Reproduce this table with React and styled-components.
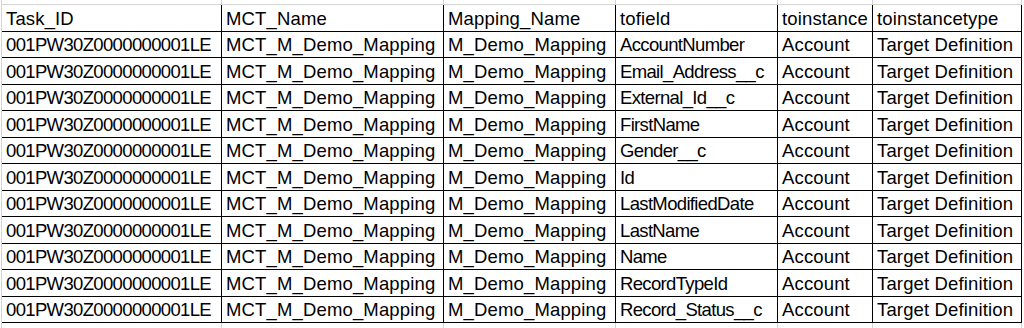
import React from "react";
import styled, { createGlobalStyle } from "styled-components";

const GlobalStyle = createGlobalStyle`
  html, body {
    margin: 0;
    padding: 0;
    background: #ffffff;
  }
  body {
    font-family: "Liberation Sans", Arial, sans-serif;
    color: #000000;
  }
`;

const cols = "220px 222px 172px 162px 95px 149px";

const Sheet = styled.div`
  width: 1024px;
  height: 328px;
  overflow: hidden;
  padding-left: 1px;
  box-sizing: border-box;
`;

const Grid = styled.div`
  display: grid;
  grid-template-columns: ${cols};
  border-left: 1px solid #d4d4d4;
  width: max-content;
`;

const GhostCell = styled.div`
  box-sizing: border-box;
  height: ${(p) => p.$h}px;
  border-right: 1px solid #d4d4d4;
  border-bottom: ${(p) => (p.$top ? "1px solid #d4d4d4" : "none")};
`;

const Cell = styled.div`
  box-sizing: border-box;
  height: 26.5px;
  display: flex;
  align-items: flex-end;
  padding: 0 0 1px 4px;
  border-right: 1px solid #000000;
  border-bottom: 1px solid #000000;
  font-size: 18.5px;
  line-height: 22px;
  letter-spacing: ${(p) => (p.$tight ? "-0.65px" : "0.15px")};
  white-space: nowrap;
  overflow: hidden;
`;

const headers = [
  "Task_ID",
  "MCT_Name",
  "Mapping_Name",
  "tofield",
  "toinstance",
  "toinstancetype",
];

const fields = [
  "AccountNumber",
  "Email_Address__c",
  "External_Id__c",
  "FirstName",
  "Gender__c",
  "Id",
  "LastModifiedDate",
  "LastName",
  "Name",
  "RecordTypeId",
  "Record_Status__c",
];

const rows = fields.map((f) => [
  "001PW30Z0000000001LE",
  "MCT_M_Demo_Mapping",
  "M_Demo_Mapping",
  f,
  "Account",
  "Target Definition",
]);

function App() {
  return (
    <Sheet>
      <GlobalStyle />
      <Grid>
        {headers.map((h) => (
          <GhostCell key={"t" + h} $h={5} $top />
        ))}
        {headers.map((h) => (
          <Cell key={h}>{h}</Cell>
        ))}
        {rows.map((r, i) =>
          r.map((v, j) => (
            <Cell key={i + "-" + j} $tight={j === 0 || j === 3}>
              {v}
            </Cell>
          ))
        )}
        {headers.map((h) => (
          <GhostCell key={"b" + h} $h={10} />
        ))}
      </Grid>
    </Sheet>
  );
}

export default App;
